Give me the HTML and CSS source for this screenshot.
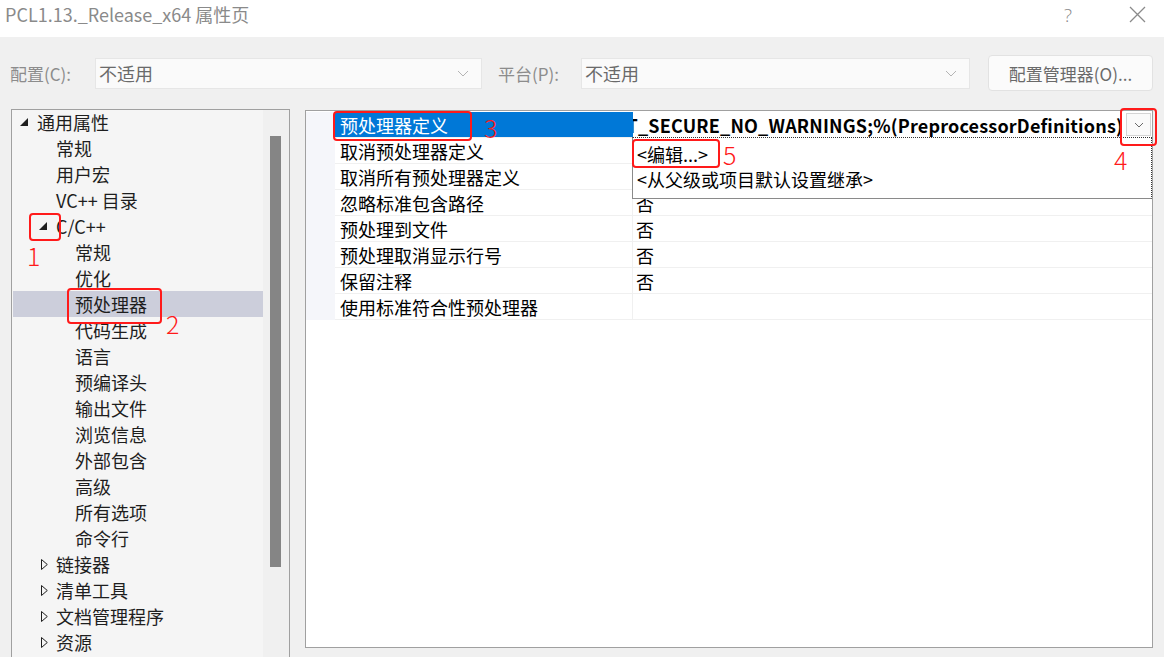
FILE: index.html
```html
<!DOCTYPE html>
<html lang="zh-CN">
<head>
<meta charset="utf-8">
<title>PCL1.13._Release_x64 属性页</title>
<link rel="stylesheet" href="styles.css">
</head>
<body>
<div class="window">
  <header class="titlebar">
    <div class="title">PCL1.13._Release_x64 属性页</div>
    <div class="caption-btns">
      <span class="help">?</span>
      <svg class="close" width="17" height="17" viewBox="0 0 17 17"><path d="M1 1 L16 16 M16 1 L1 16" stroke="#8a8a8a" stroke-width="1.3" fill="none"/></svg>
    </div>
  </header>

  <div class="toolbar">
    <span class="lbl lbl-cfg">配置(C):</span>
    <div class="combo combo-cfg"><span>不适用</span><svg width="12" height="7" viewBox="0 0 12 7"><path d="M1 1 L6 6 L11 1" stroke="#b4b4b4" fill="none"/></svg></div>
    <span class="lbl lbl-plat">平台(P):</span>
    <div class="combo combo-plat"><span>不适用</span><svg width="12" height="7" viewBox="0 0 12 7"><path d="M1 1 L6 6 L11 1" stroke="#b4b4b4" fill="none"/></svg></div>
    <button class="mgr">配置管理器(O)...</button>
  </div>

  <div class="main">
    <div class="tree">
      <div class="tree-list">
        <div class="row l0"><span class="tg"><svg class="exp" width="8" height="8" viewBox="0 0 8 8"><polygon points="8,0 8,8 0,8" fill="#1e1e1e"/></svg></span>通用属性</div>
        <div class="row l1"><span class="tg"></span>常规</div>
        <div class="row l1"><span class="tg"></span>用户宏</div>
        <div class="row l1"><span class="tg"></span>VC++ 目录</div>
        <div class="row l1"><span class="tg"><svg class="exp" width="8" height="8" viewBox="0 0 8 8"><polygon points="8,0 8,8 0,8" fill="#1e1e1e"/></svg></span>C/C++</div>
        <div class="row l2"><span class="tg"></span>常规</div>
        <div class="row l2"><span class="tg"></span>优化</div>
        <div class="row l2 sel"><span class="tg"></span>预处理器</div>
        <div class="row l2"><span class="tg"></span>代码生成</div>
        <div class="row l2"><span class="tg"></span>语言</div>
        <div class="row l2"><span class="tg"></span>预编译头</div>
        <div class="row l2"><span class="tg"></span>输出文件</div>
        <div class="row l2"><span class="tg"></span>浏览信息</div>
        <div class="row l2"><span class="tg"></span>外部包含</div>
        <div class="row l2"><span class="tg"></span>高级</div>
        <div class="row l2"><span class="tg"></span>所有选项</div>
        <div class="row l2"><span class="tg"></span>命令行</div>
        <div class="row l1"><span class="tg"><svg class="col" width="7" height="11" viewBox="0 0 7 11"><polygon points="0.5,0.5 6.3,5.5 0.5,10.5" fill="none" stroke="#1e1e1e"/></svg></span>链接器</div>
        <div class="row l1"><span class="tg"><svg class="col" width="7" height="11" viewBox="0 0 7 11"><polygon points="0.5,0.5 6.3,5.5 0.5,10.5" fill="none" stroke="#1e1e1e"/></svg></span>清单工具</div>
        <div class="row l1"><span class="tg"><svg class="col" width="7" height="11" viewBox="0 0 7 11"><polygon points="0.5,0.5 6.3,5.5 0.5,10.5" fill="none" stroke="#1e1e1e"/></svg></span>文档管理程序</div>
        <div class="row l1"><span class="tg"><svg class="col" width="7" height="11" viewBox="0 0 7 11"><polygon points="0.5,0.5 6.3,5.5 0.5,10.5" fill="none" stroke="#1e1e1e"/></svg></span>资源</div>
      </div>
      <div class="vscroll"><div class="thumb"></div></div>
    </div>

    <div class="right">
      <div class="grid">
        <div class="gr active">
          <div class="strip"></div>
          <div class="name">预处理器定义</div>
          <div class="val"><span class="vtext">_CRT_SECURE_NO_WARNINGS;%(PreprocessorDefinitions)</span><span class="ddbtn"><svg width="10" height="6" viewBox="0 0 10 6"><path d="M1 1 L5 5 L9 1" stroke="#6a6a6a" fill="none"/></svg></span></div>
        </div>
        <div class="gr"><div class="strip"></div><div class="name">取消预处理器定义</div><div class="val"></div></div>
        <div class="gr"><div class="strip"></div><div class="name">取消所有预处理器定义</div><div class="val"></div></div>
        <div class="gr"><div class="strip"></div><div class="name">忽略标准包含路径</div><div class="val">否</div></div>
        <div class="gr"><div class="strip"></div><div class="name">预处理到文件</div><div class="val">否</div></div>
        <div class="gr"><div class="strip"></div><div class="name">预处理取消显示行号</div><div class="val">否</div></div>
        <div class="gr"><div class="strip"></div><div class="name">保留注释</div><div class="val">否</div></div>
        <div class="gr"><div class="strip"></div><div class="name">使用标准符合性预处理器</div><div class="val"></div></div>
      </div>
      <div class="popup">
        <div class="opt">&lt;编辑...&gt;</div>
        <div class="opt">&lt;从父级或项目默认设置继承&gt;</div>
      </div>
    </div>
  </div>

  <div class="bottom"></div>

  <div class="mark b1"></div><span class="num n1">1</span>
  <div class="mark b2"></div><span class="num n2">2</span>
  <div class="mark b3"></div><span class="num n3">3</span>
  <div class="mark b4"></div><span class="num n4">4</span>
  <div class="mark b5"></div><span class="num n5">5</span>
</div>
</body>
</html>
```

FILE: styles.css
```css
* { box-sizing: border-box; }
html, body { margin: 0; padding: 0; }
body {
  width: 1164px;
  height: 657px;
  overflow: hidden;
  background: #f0f0f0;
  font-family: "Microsoft YaHei", "Noto Sans CJK SC", sans-serif;
  font-size: 18px;
  color: #1e1e1e;
}
.window { position: relative; width: 1164px; height: 657px; overflow: hidden; }

.titlebar {
  height: 37px;
  background: #ffffff;
  display: flex;
  align-items: center;
  justify-content: space-between;
  padding: 0 18px 0 5px;
}
.title { color: #8a8a8a; font-size: 18px; line-height: 1; margin-top: -9px; }
.caption-btns { display: flex; align-items: center; gap: 57px; margin-top: -8px; }
.help { color: #8a8a8a; font-size: 19px; font-family: "Open Sans", sans-serif; font-weight: 300; }

.toolbar {
  height: 72px;
  display: flex;
  align-items: center;
  padding-left: 10px;
}
.lbl { color: #8c8c8c; font-size: 17px; }
.lbl-cfg { width: 85px; }
.lbl-plat { width: 83px; margin-left: 16px; }
.combo {
  height: 31px;
  background: #fafafa;
  border: 1px solid #e6e6e6;
  display: flex;
  align-items: center;
  justify-content: space-between;
  padding: 0 12px 0 3px;
  color: #6a6a6a;
}
.combo-cfg { width: 387px; }
.combo-plat { width: 389px; }
.mgr {
  margin-left: 18px;
  width: 165px;
  height: 36px;
  background: #fbfbfb;
  border: 1px solid #e2e2e2;
  border-radius: 4px;
  font-family: inherit;
  font-size: 17px;
  color: #6a6a6a;
  padding: 0;
}

.main {
  display: flex;
  align-items: flex-start;
  padding-left: 11px;
  gap: 15px;
}

.tree {
  width: 279px;
  height: 560px;
  border: 1px solid #a0a0a0;
  background: #f5f5f5;
  display: flex;
}
.tree-list { width: 251px; padding: 0 0 0 1px; margin-top: -1px; }
.row {
  height: 26px;
  display: flex;
  align-items: center;
  white-space: nowrap;
}
.row.sel { background: #cccedb; }
.tg { width: 19px; height: 26px; display: flex; align-items: center; flex: none; }
.l0 { padding-left: 5px; }
.l1 { padding-left: 24px; }
.l2 { padding-left: 43px; }
.exp { margin-left: 2px; }
.col { margin-left: 4px; }
.vscroll { width: 26px; background: #f0f0f0; padding: 26px 0 0 7px; }
.thumb { width: 11px; height: 431px; background: #858585; }

.right {
  position: relative;
  width: 848px;
  height: 538px;
  margin-top: 1px;
  border: 1px solid #a0a0a0;
  background: #ffffff;
  padding-top: 1px;
}
.grid { display: flex; flex-direction: column; }
.gr { display: flex; height: 26px; color: #000; }
.strip { width: 29px; background: #f5f6fa; flex: none; }
.name {
  width: 298px;
  padding-left: 5px;
  border-bottom: 1px solid #f0f0f0;
  border-right: 1px solid #f0f0f0;
  display: flex;
  align-items: center;
  white-space: nowrap;
}
.val {
  width: 519px;
  padding-left: 3px;
  border-bottom: 1px solid #f0f0f0;
  display: flex;
  align-items: center;
  white-space: nowrap;
  overflow: hidden;
}
.gr.active .name { background: #0078d7; color: #ffffff; border-right-color: #0078d7; }
.gr.active .val {
  justify-content: flex-end;
  padding: 0 1px 0 0;
  gap: 3px;
}
.vtext { font-weight: bold; color: #000; white-space: nowrap; letter-spacing: 0.18px; }
.ddbtn {
  flex: none;
  width: 25px;
  height: 23px;
  border: 1px solid #d4d4d4;
  background: #fafafa;
  display: flex;
  align-items: center;
  justify-content: center;
}

.popup {
  position: absolute;
  left: 326px;
  top: 26px;
  width: 520px;
  height: 62px;
  background: #ffffff;
  border: 1px solid #8a8a8a;
  border-top: 1px dotted #333;
  border-right: 1px dotted #333;
  padding-top: 3px;
  color: #000;
}
.opt { height: 25px; display: flex; align-items: center; padding-left: 4px; }

.bottom {
  margin: 4px 0 0 303px;
  width: 850px;
  height: 20px;
  border: 1px solid #a0a0a0;
  background: #f0f0f0;
}

.mark {
  position: absolute;
  border: 2px solid #ff1a1a;
  border-radius: 4px;
}
.num {
  position: absolute;
  color: #ff1a1a;
  font-family: "Noto Sans CJK SC", sans-serif;
  font-weight: 300;
  font-size: 25px;
  line-height: 1;
}
.b1 { left: 29px; top: 213px; width: 32px; height: 28px; }
.n1 { left: 27px; top: 243px; }
.b2 { left: 67px; top: 288px; width: 95px; height: 36px; }
.n2 { left: 166px; top: 311px; }
.b3 { left: 333px; top: 111px; width: 139px; height: 30px; }
.n3 { left: 484px; top: 115px; }
.b4 { left: 1120px; top: 108px; width: 37px; height: 38px; }
.n4 { left: 1114px; top: 147px; }
.b5 { left: 632px; top: 139px; width: 88px; height: 29px; }
.n5 { left: 723px; top: 142px; }
```
